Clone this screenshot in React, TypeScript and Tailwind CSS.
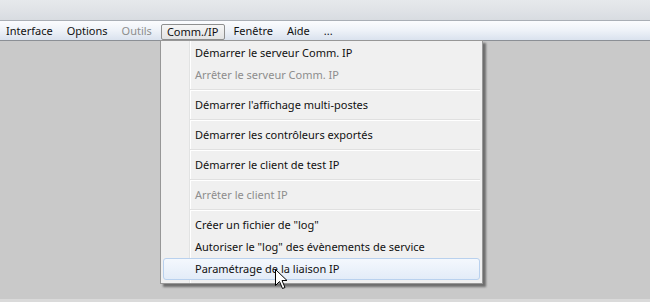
type Item = { label: string; disabled?: boolean; hover?: boolean };

// groups separated by lines
const groups: Item[][] = [
  [
    { label: 'Démarrer le serveur Comm. IP' },
    { label: 'Arrêter le serveur Comm. IP', disabled: true },
  ],
  [{ label: "Démarrer l'affichage multi-postes" }],
  [{ label: 'Démarrer les contrôleurs exportés' }],
  [{ label: 'Démarrer le client de test IP' }],
  [{ label: 'Arrêter le client IP', disabled: true }],
  [
    { label: 'Créer un fichier de "log"' },
    { label: 'Autoriser le "log" des évènements de service' },
    { label: 'Paramétrage de la liaison IP', hover: true },
  ],
];

const menus = [
  { label: 'Interface' },
  { label: 'Options' },
  { label: 'Outils', disabled: true },
  { label: 'Comm./IP', open: true },
  { label: 'Fenêtre' },
  { label: 'Aide' },
  { label: '...' },
];

function MenuRow({ item }: { item: Item }) {
  return (
    <div
      className={
        'h-[22px] rounded-[3px] border pl-[31px] leading-[20px] ' +
        (item.hover
          ? 'border-[#b9d1ee] bg-gradient-to-b from-[#f4f8fd] to-[#e3ecf8]'
          : 'border-transparent') +
        (item.disabled ? ' text-[#8d8d8d]' : ' text-[#111]')
      }
    >
      {item.label}
    </div>
  );
}

function Separator() {
  return (
    <div className="flex h-[8px] flex-col justify-center pl-[27px]">
      <div className="h-px bg-[#e0e0e0]" />
      <div className="h-px bg-white" />
    </div>
  );
}

export default function App() {
  return (
    <div
      className="relative flex h-[302px] w-[650px] flex-col overflow-hidden text-[11px]"
      style={{ fontFamily: '"Noto Sans", "Open Sans", sans-serif' }}
    >
      <div className="h-[20px] bg-gradient-to-b from-[#e6e9ec] via-[#e0e3e7] to-[#d8dce1]" />
      <div className="h-px bg-[#a9aeb5]" />
      <div className="flex h-[19px] items-center bg-gradient-to-b from-[#fbfcfe] via-[#eef2f8] to-[#dae2ee]">
        {menus.map((m, i) => (
          <div
            key={m.label}
            className={
              'flex items-center leading-none ' +
              (i === 0 ? 'ml-[-1px] ' : '') +
              (m.open
                ? 'mx-[2px] mt-[2px] h-[16px] rounded-[2px] border border-[#8e8f8f] bg-gradient-to-b from-[#f6f6f6] to-[#e2e3e4] px-[5px]'
                : 'h-[16px] px-[7px]') +
              (m.disabled ? ' text-[#8d8d8d]' : ' text-[#111]')
            }
          >
            {m.label}
          </div>
        ))}
      </div>
      <div className="h-px bg-[#8b8f95]" />
      <div className="flex-1 bg-[#c9c9c9]" />
      <div className="h-[3px] bg-[#dadada]" />

      {/* dropdown */}
      <div className="absolute left-[160px] top-[40px] h-[244px] w-[323px] border border-[#979797] bg-[#f0f0f0] px-[2px] py-px shadow-[3px_3px_2px_rgba(0,0,0,0.45)]">
        <div className="absolute bottom-0 left-[28px] top-0 w-px bg-[#e2e3e3]" />
        <div className="absolute bottom-0 left-[29px] top-0 w-px bg-white" />
        <div className="relative">
          {groups.map((g, gi) => (
            <div key={gi}>
              {gi > 0 && <Separator />}
              {g.map((it) => (
                <MenuRow key={it.label} item={it} />
              ))}
            </div>
          ))}
        </div>
      </div>

      {/* mouse pointer */}
      <svg
        className="absolute left-[275px] top-[269px]"
        width="13"
        height="21"
        viewBox="0 0 13 21"
      >
        <path
          d="M0.5 0.5 L0.5 16.5 L4.5 12.5 L7.5 19.5 L10 18.5 L7 11.5 L12 11.5 Z"
          fill="#fff"
          stroke="#000"
          strokeWidth="1"
          strokeLinejoin="miter"
        />
      </svg>
    </div>
  );
}
